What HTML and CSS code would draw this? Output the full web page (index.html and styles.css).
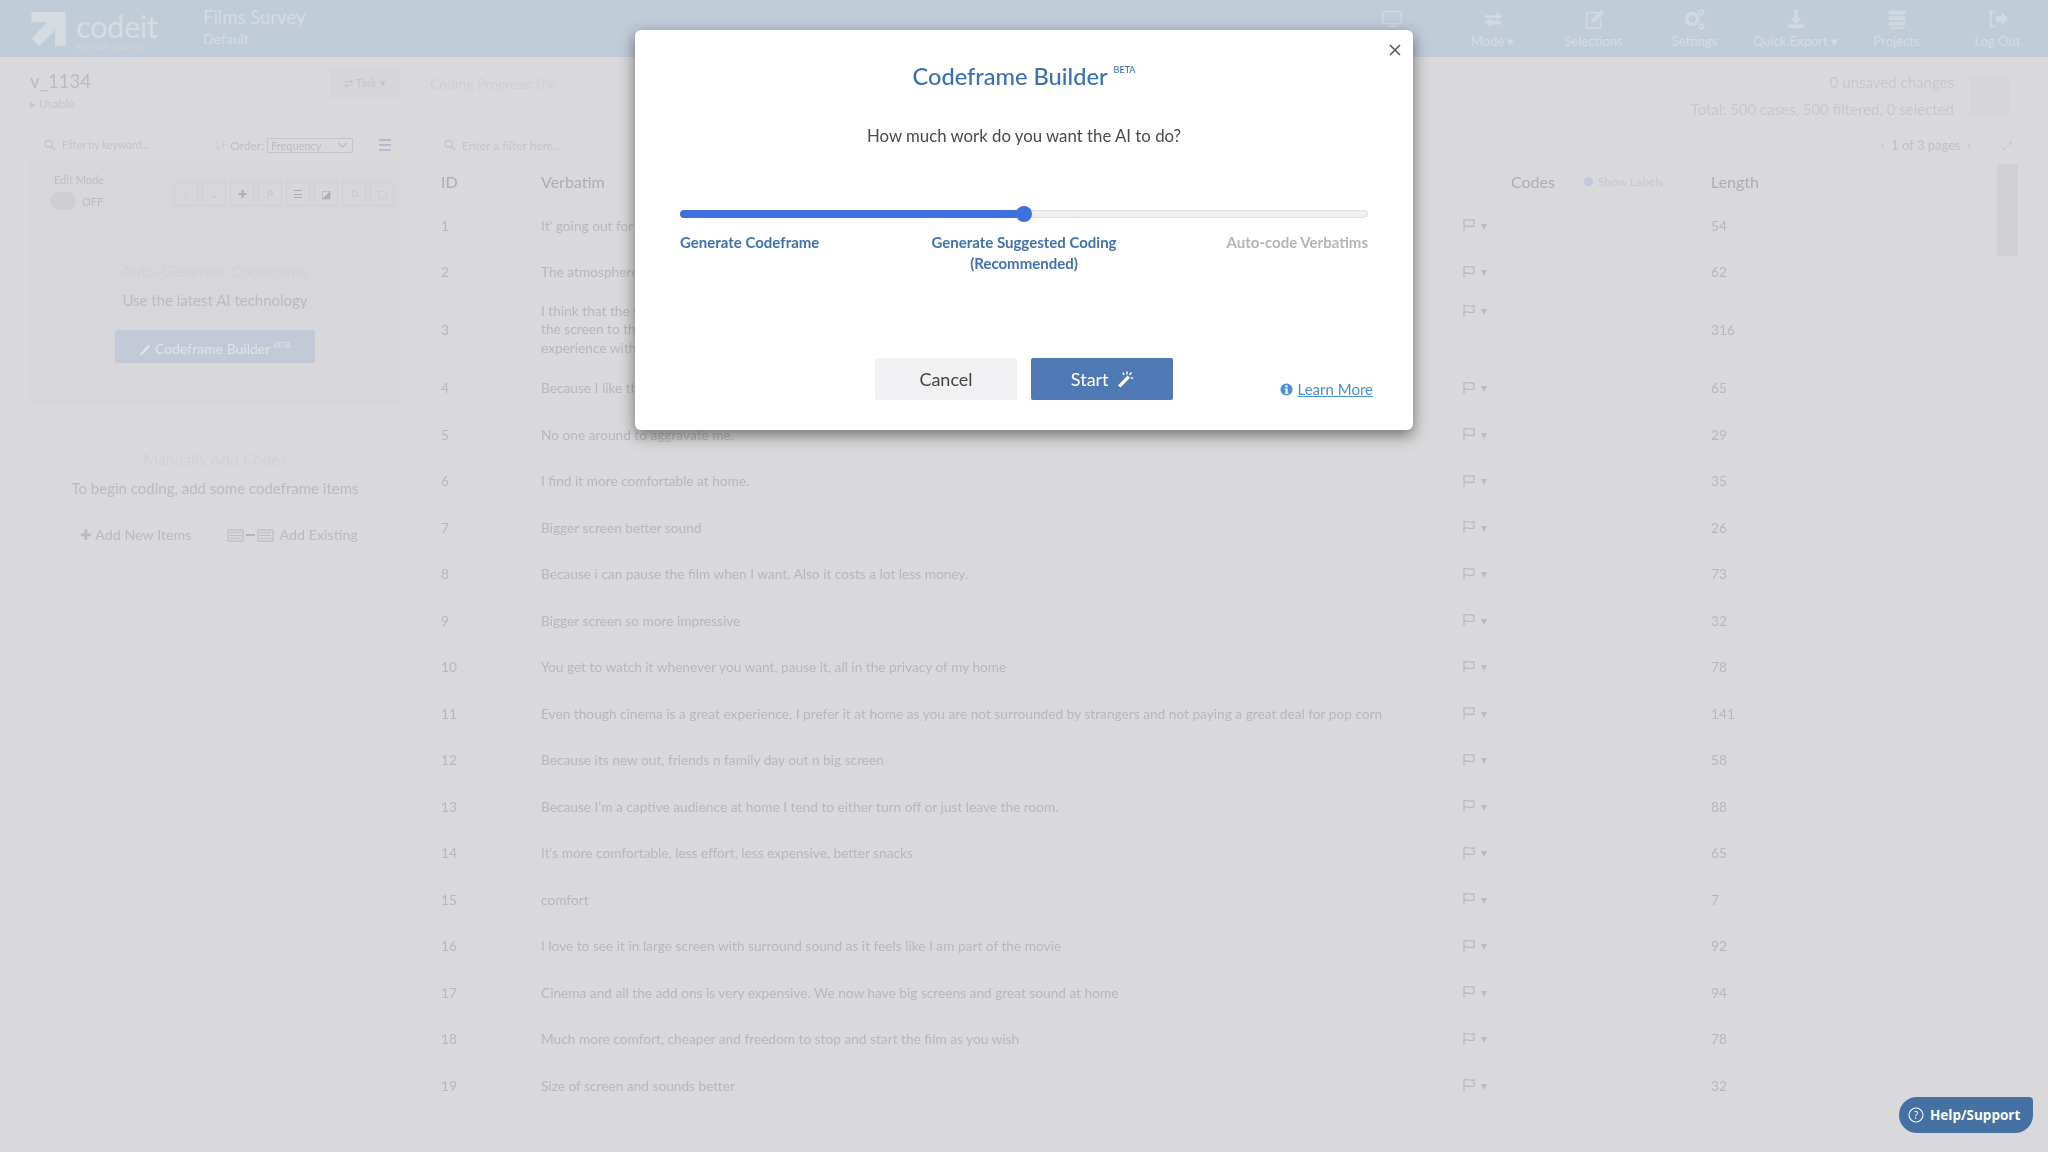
FILE: index.html
```html
<!DOCTYPE html>
<html lang="en">
<head>
<meta charset="utf-8">
<title>Codeframe Builder</title>
<link rel="stylesheet" href="styles.css">
</head>
<body>
<svg class="defs" width="0" height="0" aria-hidden="true">
  <symbol id="flag" viewBox="0 0 14 14"><path d="M2 1v12M2 2c3-1.500 5 1 10-.2v6.400c-5 1.200-7-1.300-10 .2" fill="none" stroke="currentColor" stroke-width="1.200"/></symbol>
  <symbol id="search" viewBox="0 0 14 14"><circle cx="5.500" cy="5.500" r="4" fill="none" stroke="currentColor" stroke-width="1.500"/><path d="M8.500 8.500 13 13" stroke="currentColor" stroke-width="1.800"/></symbol>
  <symbol id="listbox" viewBox="0 0 18 14"><rect x="1" y="1" width="16" height="12" fill="none" stroke="currentColor" stroke-width="1.200"/><path d="M3 4h12M3 7h12M3 10h12" stroke="currentColor"/></symbol>
</svg>
<div class="app">
  <header class="topbar">
    <div class="logo">
      <svg class="logo-mark" viewBox="0 0 38 38"><path d="M1 1h36v36H26V20L9 37 1 29l17-17H1z" fill="#d6dbdf"/></svg>
      <div class="logo-text"><span class="logo-name">codeit</span><span class="logo-tag">text insight made easy</span></div>
    </div>
    <div class="survey"><span class="survey-name">Films Survey</span><span class="survey-sub">Default</span></div>
    <nav class="nav">
      <div class="nav-item"><svg class="nav-icon" viewBox="0 0 24 24"><rect x="2" y="4" width="20" height="13" rx="1" fill="none" stroke="currentColor" stroke-width="1.500"/><path d="M7 20h10" stroke="currentColor" stroke-width="2"/></svg><span class="nav-label">&nbsp;</span></div>
      <div class="nav-item"><svg class="nav-icon" viewBox="0 0 24 24"><path d="M3 8h13V4l6 5-6 5v-3H3zM21 14H9v-3l-6 5 6 5v-3h12z" fill="currentColor"/></svg><span class="nav-label">Mode ▾</span></div>
      <div class="nav-item"><svg class="nav-icon" viewBox="0 0 24 24"><path d="M17 5H4v17h15V11" fill="none" stroke="currentColor" stroke-width="1.800"/><path d="M9 16l1-4L20 2l3 3-10 10z" fill="currentColor"/></svg><span class="nav-label">Selections</span></div>
      <div class="nav-item"><svg class="nav-icon" viewBox="0 0 24 24"><circle cx="9" cy="12" r="6" fill="none" stroke="currentColor" stroke-width="4"/><circle cx="19" cy="5" r="2.500" fill="none" stroke="currentColor" stroke-width="2"/><circle cx="19" cy="20" r="2.500" fill="none" stroke="currentColor" stroke-width="2"/></svg><span class="nav-label">Settings</span></div>
      <div class="nav-item"><svg class="nav-icon" viewBox="0 0 24 24"><path d="M10 1h4v10h4l-6 7-6-7h4z" fill="currentColor"/><rect x="3" y="18" width="18" height="4" fill="currentColor"/></svg><span class="nav-label">Quick Export ▾</span></div>
      <div class="nav-item"><svg class="nav-icon" viewBox="0 0 24 24"><path d="M3 3h18v4H3zM3 9h18v4H3zM3 15h18v4H3zM5 21h14v2H5z" fill="currentColor"/></svg><span class="nav-label">Projects</span></div>
      <div class="nav-item"><svg class="nav-icon" viewBox="0 0 24 24"><path d="M9 4H4v16h5" fill="none" stroke="currentColor" stroke-width="2.500"/><path d="M10 9h6V4l7 8-7 8v-5h-6z" fill="currentColor"/></svg><span class="nav-label">Log Out</span></div>
    </nav>
  </header>

  <section class="subbar">
    <div class="var-block"><span class="var-name">v_1134</span><span class="var-sub">▸ Usable</span></div>
    <div class="task-btn">⇄ Task ▾</div>
    <div class="progress-text">Coding Progress: 0%</div>
    <div class="status"><span>0 unsaved changes</span><span>Total: 500 cases, 500 filtered, 0 selected</span></div>
    <div class="status-box"></div>
  </section>

  <section class="filterbar">
    <div class="filter-left">
      <svg class="filter-icon"><use href="#search"/></svg>
      <span class="filter-text">Filter by keyword...</span>
      <span class="order"><span class="order-sort">↓F</span> Order:</span>
      <span class="order-select">Frequency<svg class="chev" viewBox="0 0 12 8"><path d="M1 1l5 5 5-5" fill="none" stroke="currentColor" stroke-width="1.300"/></svg></span>
      <span class="burger"><i></i><i></i><i></i></span>
    </div>
    <div class="filter-right">
      <svg class="filter-icon"><use href="#search"/></svg>
      <span class="filter-text">Enter a filter here...</span>
      <span class="pager">‹&nbsp; 1 of 3 pages &nbsp;›</span>
      <span class="expand">⤢</span>
    </div>
  </section>

  <div class="workspace">
    <aside class="side">
      <div class="side-box">
        <div class="edit-row">
          <div class="edit-mode">
            <span class="edit-label">Edit Mode</span>
            <span class="toggle-line"><span class="toggle"></span><span class="off">OFF</span></span>
          </div>
          <div class="tools">
            <span class="tool">›</span><span class="tool">⌄</span><span class="tool tool-dark">✚</span><span class="tool">P</span>
            <span class="tool tool-dark">☰</span><span class="tool tool-dark">◪</span><span class="tool">↻</span><span class="tool">▢</span>
          </div>
        </div>
        <div class="auto">
          <h3 class="side-title">Auto-Generate Codeframe</h3>
          <p class="side-copy">Use the latest AI technology</p>
          <div class="builder-btn">
            <svg class="wand-small" viewBox="0 0 14 14"><path d="M1 13 11 2l2 2L3 14z" fill="#e2e5ea"/></svg>
            Codeframe Builder <sup>BETA</sup>
          </div>
        </div>
      </div>
      <h3 class="side-title manual">Manually Add Codes</h3>
      <p class="side-copy">To begin coding, add some codeframe items</p>
      <div class="add-row">
        <span class="add-item">✚ Add New Items</span>
        <span class="add-item"><svg class="list-ic"><use href="#listbox"/></svg><span class="arrow-line"></span><svg class="list-ic"><use href="#listbox"/></svg><span class="add-label">Add Existing</span></span>
      </div>
    </aside>

    <main class="table-wrap">
      <div class="row head">
        <span>ID</span><span>Verbatim</span><span></span>
        <span class="codes-head">Codes <span class="show-labels"><i class="radio"></i> Show Labels</span></span>
        <span>Length</span>
      </div>
      <div class="row"><span>1</span><span>It' going out for a treat, the whole experience</span><span class="flagcell"><svg class="flag"><use href="#flag"/></svg> ▾</span><span></span><span>54</span></div>
      <div class="row"><span>2</span><span>The atmosphere and the sound in the cinema is better</span><span class="flagcell"><svg class="flag"><use href="#flag"/></svg> ▾</span><span></span><span>62</span></div>
      <div class="row tall"><span>3</span><span class="tall-text">I think that the sound quality and the size of the picture makes it a lot better, and that you can get closer to<br>the screen to the action, and get a much better view of the film. It is just a more interesting and better<br>experience with the whole audience around, you are sharing in the fun</span><span class="flagcell flag-top"><svg class="flag"><use href="#flag"/></svg> ▾</span><span></span><span>316</span></div>
      <div class="row"><span>4</span><span>Because I like the comfort of my own home and peace</span><span class="flagcell"><svg class="flag"><use href="#flag"/></svg> ▾</span><span></span><span>65</span></div>
      <div class="row"><span>5</span><span>No one around to aggravate me.</span><span class="flagcell"><svg class="flag"><use href="#flag"/></svg> ▾</span><span></span><span>29</span></div>
      <div class="row"><span>6</span><span>I find it more comfortable at home.</span><span class="flagcell"><svg class="flag"><use href="#flag"/></svg> ▾</span><span></span><span>35</span></div>
      <div class="row"><span>7</span><span>Bigger screen better sound</span><span class="flagcell"><svg class="flag"><use href="#flag"/></svg> ▾</span><span></span><span>26</span></div>
      <div class="row"><span>8</span><span>Because i can pause the film when I want. Also it costs a lot less money.</span><span class="flagcell"><svg class="flag"><use href="#flag"/></svg> ▾</span><span></span><span>73</span></div>
      <div class="row"><span>9</span><span>Bigger screen so more impressive</span><span class="flagcell"><svg class="flag"><use href="#flag"/></svg> ▾</span><span></span><span>32</span></div>
      <div class="row"><span>10</span><span>You get to watch it whenever you want, pause it, all in the privacy of my home</span><span class="flagcell"><svg class="flag"><use href="#flag"/></svg> ▾</span><span></span><span>78</span></div>
      <div class="row"><span>11</span><span>Even though cinema is a great experience, I prefer it at home as you are not surrounded by strangers and not paying a great deal for pop corn</span><span class="flagcell"><svg class="flag"><use href="#flag"/></svg> ▾</span><span></span><span>141</span></div>
      <div class="row"><span>12</span><span>Because its new out, friends n family day out n big screen</span><span class="flagcell"><svg class="flag"><use href="#flag"/></svg> ▾</span><span></span><span>58</span></div>
      <div class="row"><span>13</span><span>Because I'm a captive audience at home I tend to either turn off or just leave the room.</span><span class="flagcell"><svg class="flag"><use href="#flag"/></svg> ▾</span><span></span><span>88</span></div>
      <div class="row"><span>14</span><span>It's more comfortable, less effort, less expensive, better snacks</span><span class="flagcell"><svg class="flag"><use href="#flag"/></svg> ▾</span><span></span><span>65</span></div>
      <div class="row"><span>15</span><span>comfort</span><span class="flagcell"><svg class="flag"><use href="#flag"/></svg> ▾</span><span></span><span>7</span></div>
      <div class="row"><span>16</span><span>I love to see it in large screen with surround sound as it feels like I am part of the movie</span><span class="flagcell"><svg class="flag"><use href="#flag"/></svg> ▾</span><span></span><span>92</span></div>
      <div class="row"><span>17</span><span>Cinema and all the add ons is very expensive. We now have big screens and great sound at home</span><span class="flagcell"><svg class="flag"><use href="#flag"/></svg> ▾</span><span></span><span>94</span></div>
      <div class="row"><span>18</span><span>Much more comfort, cheaper and freedom to stop and start the film as you wish</span><span class="flagcell"><svg class="flag"><use href="#flag"/></svg> ▾</span><span></span><span>78</span></div>
      <div class="row"><span>19</span><span>Size of screen and sounds better</span><span class="flagcell"><svg class="flag"><use href="#flag"/></svg> ▾</span><span></span><span>32</span></div>
    </main>
    <div class="scrollbar"><div class="scroll-thumb"></div></div>
  </div>
</div>

<div class="modal">
  <button class="close" aria-label="Close"><svg viewBox="0 0 12 12"><path d="M1 1l10 10M11 1 1 11" stroke="currentColor" stroke-width="1.500"/></svg></button>
  <h2 class="modal-title">Codeframe Builder<sup>BETA</sup></h2>
  <p class="modal-question">How much work do you want the AI to do?</p>
  <div class="slider"><div class="slider-fill"></div><div class="slider-thumb"></div></div>
  <div class="slider-labels">
    <span class="lab lab-left">Generate Codeframe</span>
    <span class="lab lab-mid">Generate Suggested Coding<br>(Recommended)</span>
    <span class="lab lab-right">Auto-code Verbatims</span>
  </div>
  <div class="modal-actions">
    <button class="btn btn-cancel">Cancel</button>
    <button class="btn btn-start">Start
      <svg class="wand" viewBox="0 0 16 16"><path d="M1 14 10.500 4l2.500 2.300L3.500 16z" fill="#fff"/><path d="M6 1l1 2.500M10 0v3M14.500 1 12.500 3.500M16 7 14 6" stroke="#fff" stroke-width="1.400"/></svg>
    </button>
    <a class="learn"><svg class="info" viewBox="0 0 14 14"><circle cx="7" cy="7" r="6.500" fill="#4a90d2"/><rect x="5.800" y="2.500" width="2.400" height="2.200" fill="#fff"/><path d="M5 6h3.200v4.500h1v1H5v-1h1V7H5z" fill="#fff"/></svg><span>Learn More</span></a>
  </div>
</div>

<div class="help">
  <svg class="help-icon" viewBox="0 0 16 16"><circle cx="8" cy="8" r="7" fill="none" stroke="#fff" stroke-width="1.100"/><text x="8" y="11.500" text-anchor="middle" class="help-q">?</text></svg>
  Help/Support
</div>
</body>
</html>
```
FILE: styles.css
```css
* { box-sizing: border-box; }
html, body { margin: 0; height: 100%; }
body {
  background: #d9d9db;
  font-family: Lato, "Open Sans", sans-serif;
  color: #b6b6ba;
  overflow: hidden;
  position: relative;
}
.defs { position: absolute; }
.app { height: 1152px; overflow: hidden; filter: blur(0.6px); }

/* top bar */
.topbar { height: 57px; background: #c1ccd9; display: flex; align-items: stretch; color: #d3dbe2; }
.logo { display: flex; align-items: flex-start; padding: 11px 0 0 30px; width: 203px; gap: 9px; }
.logo-mark { width: 37px; height: 36px; flex: none; }
.logo-text { display: flex; flex-direction: column; }
.logo-name { font-size: 31px; line-height: 30px; color: #d6dbdf; letter-spacing: -.5px; }
.logo-tag { font-size: 7px; line-height: 10px; color: #cdd6dd; white-space: nowrap; }
.survey { display: flex; flex-direction: column; padding-top: 5px; }
.survey-name { font-size: 18.500px; line-height: 24px; color: #d3dbe2; }
.survey-sub { font-size: 14px; line-height: 20px; color: #d3dbe2; }
.nav { display: flex; margin-left: auto; }
.nav-item { width: 101px; display: flex; flex-direction: column; align-items: center; padding-top: 8px; }
.nav-icon { width: 22px; height: 22px; color: #d0d9e0; }
.nav-label { font-size: 13px; line-height: 18px; margin-top: 2px; white-space: nowrap; }

/* sub bar */
.subbar { height: 73px; display: flex; padding: 0 38px 0 30px; align-items: flex-start; }
.var-block { display: flex; flex-direction: column; width: 300px; padding-top: 11px; }
.var-name { font-size: 18.500px; line-height: 26px; color: #bdbdc1; }
.var-sub { font-size: 12px; line-height: 20px; color: #c6c6ca; }
.task-btn { width: 70px; height: 30px; margin-top: 11px; background: #d6d6d8; font-size: 11px; line-height: 30px; text-align: center; color: #c3c4cc; }
.progress-text { margin: 19px 0 0 30px; font-size: 14px; line-height: 16px; color: #cfd0d4; }
.status { margin-left: auto; display: flex; flex-direction: column; align-items: flex-end; padding-top: 12px; font-size: 15px; line-height: 27px; color: #c9c9cd; }
.status-box { width: 40px; height: 39px; margin: 19px 0 0 16px; background: #d6d6d8; }

/* filter row */
.filterbar { height: 30px; display: flex; font-size: 12px; color: #c6c6ca; }
.filter-left { width: 430px; padding-left: 44px; display: flex; align-items: center; }
.filter-right { flex: 1; padding: 0 35px 0 14px; display: flex; align-items: center; }
.filter-icon { width: 12px; height: 12px; margin-right: 6px; color: #c4c4cc; flex: none; }
.filter-text { width: 150px; white-space: nowrap; }
.filter-left .filter-text { width: 153px; font-size: 10.500px; }
.order { color: #c0c0c4; margin-right: 10px; white-space: nowrap; width: 43px; display: inline-flex; gap: 3px; margin-left: -1px; }
.order-sort { font-size: 10px; color: #cbcbcf; }
.order-select { width: 86px; height: 15px; border: 1px solid #c6c6cc; font-size: 11px; line-height: 13px; padding-left: 3px; display: flex; justify-content: space-between; align-items: center; color: #bcbcc2; }
.chev { width: 11px; height: 7px; margin-right: 4px; }
.burger { margin-left: 26px; width: 12px; display: flex; flex-direction: column; gap: 3px; }
.burger i { height: 2px; background: #b9b9d0; display: block; }
.pager { margin-left: auto; color: #c2c2c6; font-size: 13px; white-space: nowrap; }
.expand { margin-left: 32px; color: #cbcbcf; }

/* workspace */
.workspace { display: flex; height: 992px; }
.side { width: 370px; margin-left: 30px; flex: none; text-align: center; }
.side-box { height: 245px; background: #d7d7d9; padding: 12px 6px 0 24px; }
.edit-row { display: flex; justify-content: space-between; }
.edit-mode { display: flex; flex-direction: column; text-align: left; }
.edit-label { font-size: 11px; line-height: 16px; color: #c0c0c4; }
.toggle-line { display: flex; align-items: center; gap: 6px; margin-top: 4px; margin-left: -4px; }
.toggle { width: 26px; height: 18px; border-radius: 9px; background: #cfcfd2; }
.off { font-size: 11px; color: #bdbdc1; }
.tools { display: flex; gap: 4px; margin-top: 10px; }
.tool { width: 24px; height: 24px; border: 1px solid #d0d0d3; border-radius: 2px; font-size: 11px; line-height: 22px; text-align: center; color: #c8c8cc; }
.tool-dark { color: #aeaeb4; }
.auto { display: flex; flex-direction: column; align-items: center; margin: 51px 0 0 -18px; }
.side-title { margin: 0; font-size: 16px; line-height: 20px; font-weight: 400; color: #ccd3db; }
.side-copy { margin: 9px 0 0; font-size: 15px; line-height: 20px; color: #bcbcc0; }
.builder-btn { width: 200px; height: 33px; margin-top: 20px; background: #c3c9d6; border-radius: 2px; color: #dfe2e7; font-size: 14px; line-height: 30px; }
.builder-btn sup { font-size: 7px; }
.wand-small { width: 12px; height: 12px; vertical-align: -1px; }
.manual { margin-top: 44px; }
.add-row { display: flex; justify-content: center; gap: 35px; margin: 27px 0 0 8px; font-size: 14.300px; line-height: 20px; color: #bcbcc0; }
.add-item { display: inline-flex; align-items: center; white-space: nowrap; gap: 2px; }
.add-label { margin-left: 4px; }
.list-ic { width: 17px; height: 13px; }
.arrow-line { width: 9px; height: 2px; background: #b6b6ba; }

/* table */
.table-wrap { flex: none; width: 1556px; margin-left: 41px; padding-top: 0; }
.row {
  display: grid;
  grid-template-columns: 100px 921px 49px 200px 1fr;
  height: 46.5px;
  align-items: center;
  font-size: 13.700px;
  color: #b9b9bd;
  white-space: nowrap;
}
.tall { height: 69.5px; }
.tall-text { line-height: 18.700px; overflow: hidden; }
.flag-top { align-self: start; padding-top: 8px; }
.head { height: 42px; font-size: 16px; color: #aeaeb3; padding-top: 1px; }
.flagcell { display: flex; align-items: center; gap: 5px; font-size: 12px; color: #bcbcc0; }
.flag { width: 14px; height: 14px; color: #bbbbbf; }
.codes-head { display: flex; align-items: center; }
.show-labels { font-size: 12px; margin-left: 29px; color: #cacace; display: inline-flex; align-items: center; gap: 5px; }
.radio { width: 9px; height: 9px; border-radius: 50%; background: #c4c9da; }
.scrollbar { width: 21px; flex: none; }
.scroll-thumb { height: 92px; margin-top: 4px; background: #d1d1d3; }

/* modal */
.modal {
  position: absolute; left: 635px; top: 30px; width: 778px; height: 400px;
  background: #fff; border-radius: 6px; box-shadow: 0 5px 15px rgba(0,0,0,.5);
  padding: 0 45px; text-align: center;
}
.close { position: absolute; top: 13px; right: 11px; width: 14px; height: 14px; padding: 1px; border: 0; background: none; color: #555; }
.close svg { display: block; }
.modal-title { margin: 30px 0 0; font-size: 23.600px; line-height: 32px; font-weight: 500; color: #3a71b0; }
.modal-title sup { font-size: 9px; margin-left: 6px; vertical-align: 12px; line-height: 0; }
.modal-question { margin: 32px 0 0; font-size: 16.800px; line-height: 24px; color: #4a4a4a; }
.slider { position: relative; height: 8px; margin-top: 62px; background: #efefef; border: 1px solid #e0e0e0; border-radius: 4px; }
.slider-fill { position: absolute; left: -1px; top: -1px; bottom: -1px; width: 50%; background: #3e6fde; border-radius: 4px 0 0 4px; }
.slider-thumb { position: absolute; left: 50%; top: 50%; width: 16px; height: 16px; margin: -8px 0 0 -8px; background: #3e6fde; border-radius: 50%; }
.slider-labels { display: grid; grid-template-columns: 1fr auto 1fr; margin-top: 14px; font-size: 15px; line-height: 21px; font-weight: 700; color: #3e72b2; }
.lab-left { text-align: left; }
.lab-right { text-align: right; color: #b4b4b4; }
.modal-actions { position: absolute; left: 240px; right: 40px; top: 328px; display: flex; gap: 14px; }
.btn { width: 142px; height: 42px; border: 0; border-radius: 2px; font: 18px Lato, sans-serif; }
.btn-cancel { background: #f1f1f3; color: #444; }
.btn-start { background: #4e79b4; color: #fff; }
.wand { width: 16px; height: 17px; margin-left: 4px; vertical-align: -2px; }
.learn { margin: 19px 0 0 auto; display: flex; align-items: center; gap: 5px; font-size: 15px; line-height: 24px; color: #4a90d2; white-space: nowrap; }
.learn span { text-decoration: underline; }
.info { width: 13px; height: 13px; }

/* help */
.help {
  position: absolute; left: 1899px; top: 1097px; width: 134px; height: 36px;
  background: #4470a3; color: #fff; border-radius: 18px 4px 18px 18px;
  display: flex; align-items: center; gap: 6px; padding-left: 9px;
  font: 700 13.500px "Open Sans", sans-serif; white-space: nowrap;
}
.help-icon { width: 16px; height: 16px; flex: none; }
.help-q { font: 400 10px "Open Sans", sans-serif; fill: #fff; }
```
